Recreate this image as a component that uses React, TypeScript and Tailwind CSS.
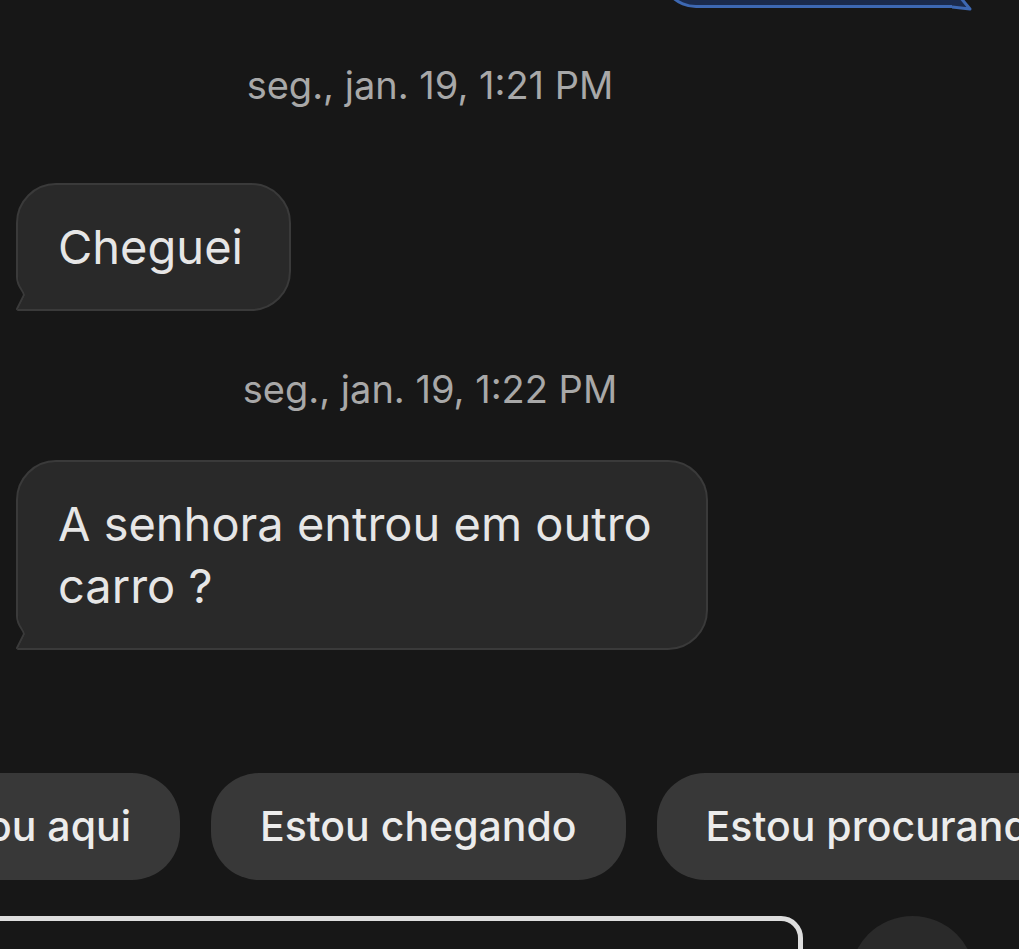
const BG = '#171717';

function Timestamp({ children, className = '' }: { children: string; className?: string }) {
  return (
    <div className={`w-[860px] text-center text-[38px] leading-[40px] text-[#a8a8a8] ${className}`}>
      {children}
    </div>
  );
}

function Bubble({ children, className = '' }: { children: string; className?: string }) {
  return (
    <div className={`relative ml-[16px] w-fit max-w-[692px] ${className}`}>
      <div className="rounded-[40px] rounded-bl-none border-2 border-[#3a3a3a] bg-[#292929] pl-[40px] pr-[46px] py-[31px] text-[47px] leading-[62px] text-[#e6e6e6]">
        {children}
      </div>
      {/* tail notch */}
      <svg className="absolute left-0 bottom-0" width="14" height="34" viewBox="0 0 14 34">
        <path d="M0 0 L2 0 C2 10 9 14 9 18 L1 34 L0 34 Z" fill={BG} />
        <path d="M1 0 C1 10 8 14 8 18 L0.5 33" fill="none" stroke="#3a3a3a" strokeWidth="2" />
      </svg>
    </div>
  );
}

function Chip({ label, className = '' }: { label: string; className?: string }) {
  return (
    <div className={`flex h-[107px] items-center whitespace-nowrap rounded-[48px] bg-[#383838] px-[49px] text-[41px] font-medium text-[#ececec] ${className}`}>
      {label}
    </div>
  );
}

export default function App() {
  return (
    <div className="h-[949px] w-[1019px] overflow-hidden bg-[#171717] font-['Inter',sans-serif]">
      {/* previous outgoing bubble, mostly scrolled off */}
      <div className="relative -mt-[60px] ml-[660px] h-[68px] w-[300px]">
        <div className="h-full rounded-bl-[36px] border-[3px] border-t-0 border-r-0 border-[#3d68b2] bg-[#1b2b4d]" />
        <svg className="absolute -right-[12px] bottom-[-3px]" width="20" height="12" viewBox="0 0 20 12">
          <path d="M0 0 L0 8 L18 10 L8 0 Z" fill="#1b2b4d" />
          <path d="M0 8 L18 10 L8 -2" fill="none" stroke="#3d68b2" strokeWidth="3" strokeLinejoin="round" />
        </svg>
      </div>

      <Timestamp className="mt-[57px]">seg., jan. 19, 1:21 PM</Timestamp>
      <Bubble className="mt-[78px]">Cheguei</Bubble>

      <Timestamp className="mt-[58px]">seg., jan. 19, 1:22 PM</Timestamp>
      <Bubble className="mt-[51px]">A senhora entrou em outro carro ?</Bubble>

      {/* quick replies */}
      <div className="mt-[123px] grid grid-cols-[180px_max-content_max-content] gap-[31px] overflow-hidden">
        <Chip label="Estou aqui" className="justify-self-end" />
        <Chip label="Estou chegando" />
        <Chip label="Estou procurando" />
      </div>

      {/* composer */}
      <div className="mt-[36px] flex items-start gap-[47px]">
        <div className="-ml-[40px] h-[120px] w-[843px] shrink-0 rounded-[22px] border-[5px] border-[#dedede] bg-[#171717]" />
        <div className="h-[125px] w-[125px] shrink-0 rounded-full bg-[#2a2a2a]" />
      </div>
    </div>
  );
}
